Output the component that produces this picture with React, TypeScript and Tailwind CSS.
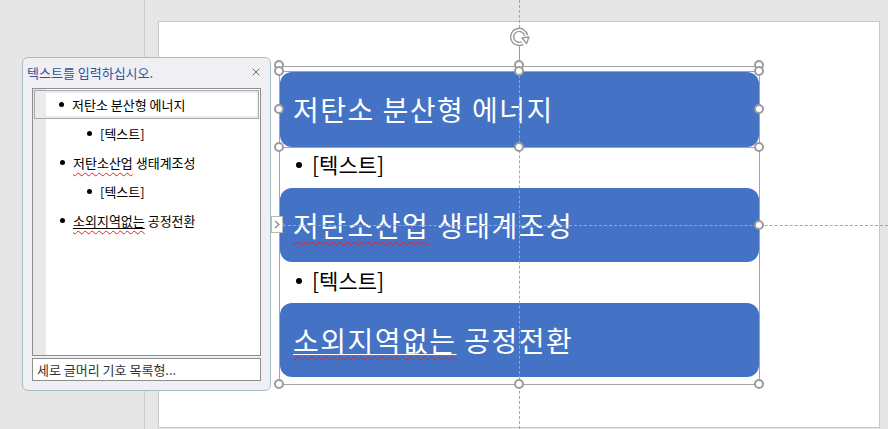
import { X } from "lucide-react";

// selection handles: outer SmartArt frame, then the selected first shape
const handles = [
  "left-[274px] top-[60px]",
  "left-[514px] top-[60px]",
  "left-[754px] top-[60px]",
  "left-[274px] top-[220px]",
  "left-[754px] top-[220px]",
  "left-[274px] top-[379px]",
  "left-[514px] top-[379px]",
  "left-[754px] top-[379px]",
  "left-[274px] top-[66px]",
  "left-[514px] top-[66px]",
  "left-[754px] top-[66px]",
  "left-[274px] top-[104px]",
  "left-[754px] top-[104px]",
  "left-[274px] top-[142px]",
  "left-[514px] top-[142px]",
  "left-[754px] top-[142px]",
];

const Wavy = ({ children }: { children: React.ReactNode }) => (
  <span className="underline decoration-wavy decoration-[#e5212a] decoration-1 underline-offset-[4px] [text-decoration-skip-ink:none]">
    {children}
  </span>
);

const Underlined = ({ children }: { children: React.ReactNode }) => (
  <span className="underline decoration-solid decoration-1 underline-offset-[2px] [text-decoration-skip-ink:none]">
    <Wavy>{children}</Wavy>
  </span>
);

const Dot = ({ size = "w-[5px] h-[5px]" }: { size?: string }) => (
  <span className={`${size} shrink-0 rounded-full bg-black`} />
);

const RotateIcon = () => (
  <svg width="24" height="24" viewBox="0 0 24 24" className="absolute left-[507px] top-[25px]">
    <circle cx="12" cy="12" r="9" fill="#fff" />
    <path d="M19 10.5 A7 7 0 1 0 15.5 18" fill="none" stroke="#9a9a9a" strokeWidth="4.5" />
    <path d="M19 10.5 A7 7 0 1 0 15.5 18" fill="none" stroke="#fff" strokeWidth="1.6" />
    <path d="M15 13 L22 12 L19.5 18.5 Z" fill="#fff" stroke="#9a9a9a" strokeWidth="1.4" strokeLinejoin="round" />
  </svg>
);

const boxText = "flex items-center pl-[13px] text-white text-[28px] tracking-[1.5px] leading-none";

export default function App() {
  return (
    <div className="relative w-[888px] h-[429px] overflow-hidden bg-[#e6e6e6] font-['Noto_Sans_CJK_KR',sans-serif]">
      <div className="flex h-full">
        <div className="w-[145px] shrink-0 border-r border-[#cbcbcb]" />
        <div className="pl-[13px] pt-[21px]">
          <div className="w-[722px] h-[407px] bg-white border border-[#c8c8c8] pl-[120px] pt-[44px]">
            {/* SmartArt frame */}
            <div className="w-[481px] h-[319px] border border-[#a3a3a3] pt-[5px] flex flex-col">
              <div className={`h-[75px] rounded-[12px] bg-[#4472c4] pb-[2px] ${boxText}`}>저탄소 분산형 에너지</div>
              <div className="h-[41px] flex items-start pt-[4px] pl-[16px] gap-[10px]">
                <Dot size="w-[6px] h-[6px] mt-[11px]" />
                <span className="text-[21px] leading-[26px] text-black">[텍스트]</span>
              </div>
              <div className={`h-[74px] rounded-[12px] bg-[#4472c4] ${boxText}`}>
                <span>
                  <Wavy>저탄소산업</Wavy> 생태계조성
                </span>
              </div>
              <div className="h-[41px] flex items-start pt-[5px] pl-[16px] gap-[10px]">
                <Dot size="w-[6px] h-[6px] mt-[11px]" />
                <span className="text-[21px] leading-[26px] text-black">[텍스트]</span>
              </div>
              <div className={`h-[74px] rounded-[12px] bg-[#4472c4] ${boxText}`}>
                <span>
                  <Underlined>소외지역없는</Underlined> 공정전환
                </span>
              </div>
            </div>
          </div>
        </div>
      </div>

      {/* guides */}
      <div className="absolute left-[519px] top-0 h-full border-l border-dashed border-[#a6a6a6]" />
      <div className="absolute left-[283px] right-0 top-[225px] border-t border-dashed border-[#a6a6a6]" />

      {/* selection of first shape */}
      <div className="absolute left-[279px] top-[71px] w-[481px] h-[77px] border border-[#a3a3a3]" />
      <div className="absolute left-[519px] top-[47px] h-[14px] w-px bg-[#9a9a9a]" />
      <RotateIcon />
      {handles.map((h) => (
        <div key={h} className={`absolute ${h} w-[10px] h-[10px] rounded-full border-2 border-[#9b9b9b] bg-white`} />
      ))}

      {/* text pane */}
      <div className="absolute left-[22px] top-[57px] w-[249px] h-[334px] rounded-[6px] border border-[#a9bcc6] bg-[#efeff4] flex flex-col">
        <div className="h-[30px] flex items-center justify-between pl-[4px] pr-[8px] pb-[2px]">
          <span className="text-[13px] leading-none text-[#2b579a]">텍스트를 입력하십시오.</span>
          <X size={12} strokeWidth={1.6} className="text-[#505050]" />
        </div>
        <div className="mx-[9px] h-[268px] border border-[#8e8e8e] bg-[linear-gradient(to_right,#e9e9e9_13px,#ffffff_13px)] p-[1px] text-[13px] leading-none text-black">
          <div className="h-[29px] border border-[#a8a8a8] bg-[#ebebeb] pl-[11px] pr-[1px] py-[2px]">
            <div className="h-full bg-white flex items-center pl-[13px] gap-[8px]">
              <Dot />
              <span>저탄소 분산형 에너지</span>
            </div>
          </div>
          <div className="h-[29px] flex items-center pl-[53px] gap-[8px]">
            <Dot />
            <span>[텍스트]</span>
          </div>
          <div className="h-[29px] flex items-center pl-[26px] gap-[8px]">
            <Dot />
            <span>
              <Wavy>저탄소산업</Wavy> 생태계조성
            </span>
          </div>
          <div className="h-[29px] flex items-center pl-[53px] gap-[8px]">
            <Dot />
            <span>[텍스트]</span>
          </div>
          <div className="h-[29px] flex items-center pl-[26px] gap-[8px]">
            <Dot />
            <span>
              <Underlined>소외지역없는</Underlined> 공정전환
            </span>
          </div>
        </div>
        <div className="mx-[9px] mt-[2px] h-[23px] border border-[#8e8e8e] bg-white flex items-center pl-[4px] text-[13px] leading-none text-[#333333]">
          세로 글머리 기호 목록형...
        </div>
        {/* collapse tab */}
        <div className="absolute left-[248px] top-[158px] w-[12px] h-[17px] border border-[#b8b8b8] bg-white flex items-center justify-center">
          <svg width="6" height="9" viewBox="0 0 6 9">
            <path d="M1 1 L5 4.5 L1 8" fill="none" stroke="#8a8a8a" strokeWidth="1.3" />
          </svg>
        </div>
      </div>
    </div>
  );
}
